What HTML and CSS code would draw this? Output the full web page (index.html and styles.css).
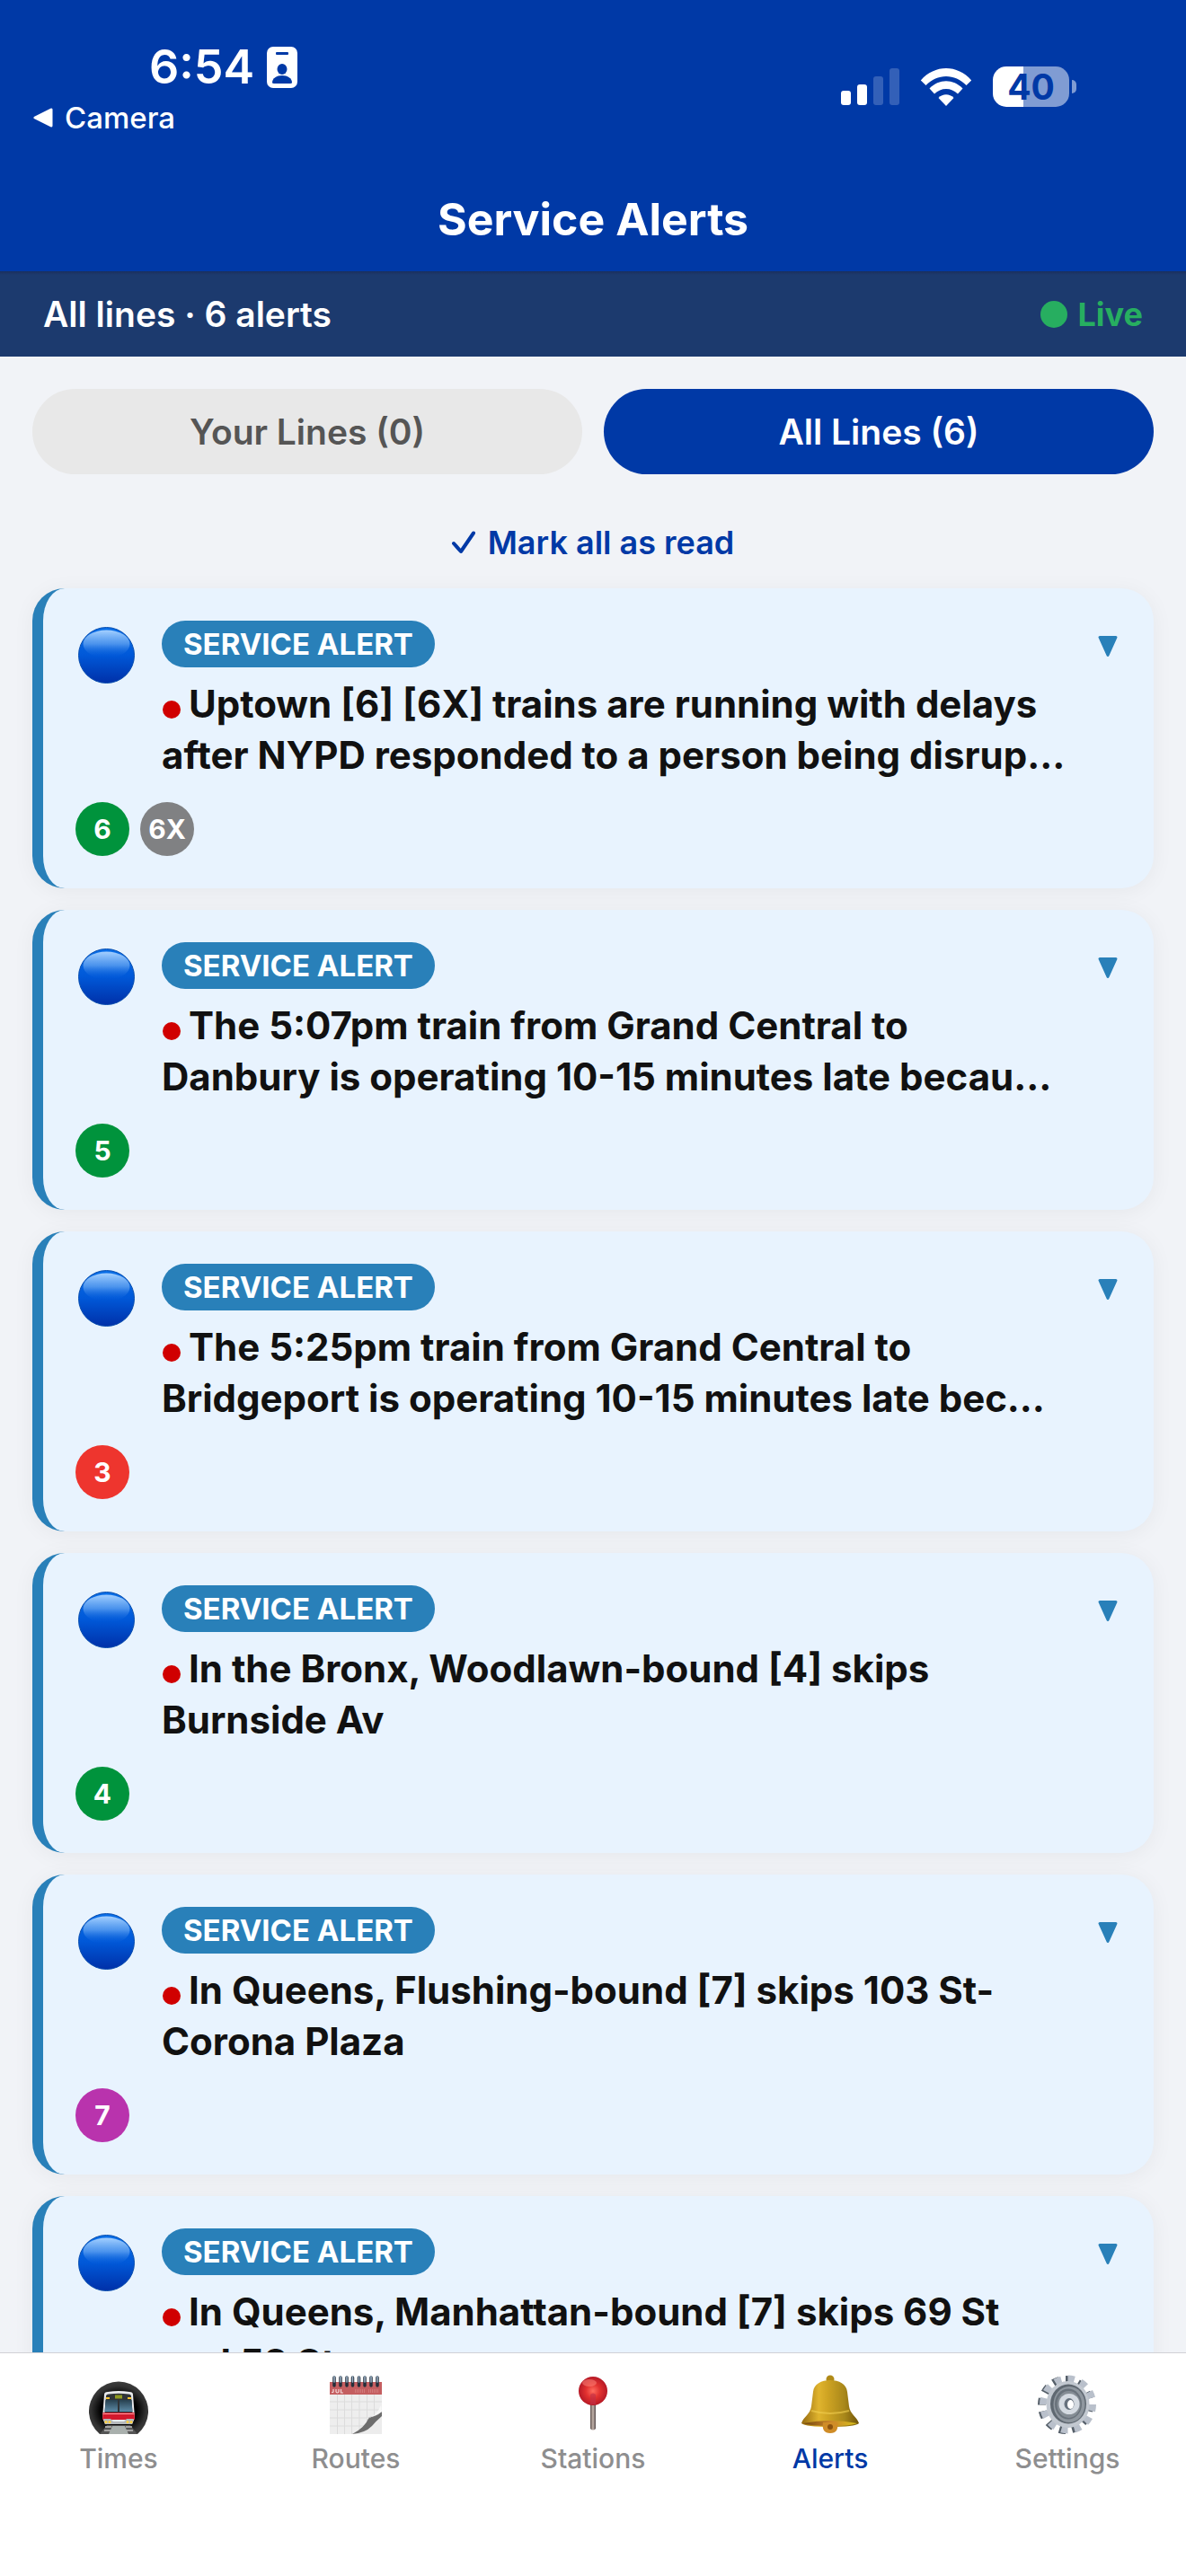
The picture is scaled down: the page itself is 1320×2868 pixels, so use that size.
FILE: index.html
```html
<!DOCTYPE html>
<html lang="en">
<head>
<meta charset="utf-8">
<meta name="viewport" content="width=device-width, initial-scale=1">
<title>Service Alerts</title>
<link rel="stylesheet" href="styles.css">
</head>
<body>
<svg class="defs" aria-hidden="true">
  <defs>
    <linearGradient id="orb-fill" x1="0" y1="0" x2="0" y2="1">
      <stop offset="0" stop-color="#0a6fe8"/><stop offset=".5" stop-color="#0058d8"/><stop offset="1" stop-color="#0030a8"/>
    </linearGradient>
    <linearGradient id="orb-shine" x1="0" y1="0" x2="0" y2="1">
      <stop offset="0" stop-color="#a4d0ff"/><stop offset=".5" stop-color="#5c9ff0" stop-opacity=".8"/><stop offset="1" stop-color="#0058d8" stop-opacity="0"/>
    </linearGradient>
    <symbol id="orb" viewBox="0 0 63 63">
      <circle cx="31.500" cy="31.500" r="31" fill="url(#orb-fill)" stroke="#0b4fae" stroke-width="1"/>
      <ellipse cx="31.500" cy="19" rx="26" ry="15.500" fill="url(#orb-shine)"/>
    </symbol>
    <symbol id="caret" viewBox="0 0 22 23">
      <path d="M2 1.500H20L11 21.500Z" fill="currentColor" stroke="currentColor" stroke-width="3" stroke-linejoin="round"/>
    </symbol>
  </defs>
</svg>

<div class="app">
  <header class="top">
    <div class="status">
      <div class="status-left">
        <div class="clock">6:54
          <svg class="id-icon" viewBox="0 0 34 46" aria-hidden="true">
            <rect width="34" height="46" rx="7" fill="#fff"/>
            <rect x="10" y="6" width="14" height="3" rx="1" fill="#0039a6"/>
            <ellipse cx="17" cy="25" rx="5.500" ry="6" fill="#0039a6"/>
            <path d="M6 40C6 35 11 32 17 32S28 35 28 40Q28 41 26 41H8Q6 41 6 40Z" fill="#0039a6"/>
          </svg>
        </div>
        <a class="back" href="#camera">
          <svg class="back-icon" viewBox="0 0 22 22" aria-hidden="true"><path d="M20 2V20L2 11Z" fill="#fff" stroke="#fff" stroke-width="3" stroke-linejoin="round"/></svg>
          Camera</a>
      </div>
      <div class="status-right">
        <svg class="signal" viewBox="0 0 65 41" aria-hidden="true">
          <rect y="25" width="11" height="16" rx="3" fill="#fff"/>
          <rect x="18" y="18" width="11" height="23" rx="3" fill="#fff"/>
          <rect x="36" y="9" width="11" height="32" rx="3" fill="#3360b8"/>
          <rect x="54" width="11" height="41" rx="3" fill="#3360b8"/>
        </svg>
        <svg class="wifi" viewBox="0 0 58 42" aria-hidden="true">
          <path d="M0.800 13.500C16-4.500 42-4.500 57.200 13.500L51.500 19C39 5.500 19 5.500 6.500 19Z" fill="#fff"/>
          <path d="M10.500 22.500C21 11.500 37 11.500 47.500 22.500L42 28.500C35 21 23 21 16 28.500Z" fill="#fff"/>
          <path d="M20.500 33C25 28 33 28 37.500 33L29 42Z" fill="#fff"/>
        </svg>
        <div class="battery"><span class="battery-level">40</span><span class="battery-cap"></span></div>
      </div>
    </div>
    <h1 class="title">Service Alerts</h1>
  </header>

  <div class="summary">
    <span class="summary-text">All lines · 6 alerts</span>
    <span class="live"><span class="live-dot"></span>Live</span>
  </div>

  <main class="content">
    <div class="filters">
      <button class="filter" type="button">Your Lines (0)</button>
      <button class="filter filter-active" type="button">All Lines (6)</button>
    </div>
    <button class="mark-read" type="button">
      <svg class="check" viewBox="0 0 26 26" aria-hidden="true"><path d="M2 14L10 23L24 2.500" fill="none" stroke="currentColor" stroke-width="4" stroke-linecap="round" stroke-linejoin="round"/></svg>
      Mark all as read</button>

    <div class="alerts">
      <article class="card">
        <div class="card-main">
          <svg class="orb" aria-hidden="true"><use href="#orb"/></svg>
          <div class="card-body">
            <span class="badge">SERVICE ALERT</span>
            <h2 class="headline"><span class="unread"></span>Uptown [6] [6X] trains are running with delays after NYPD responded to a person being disrup…</h2>
          </div>
          <button class="expand" type="button" aria-label="Expand alert"><svg class="caret" aria-hidden="true"><use href="#caret"/></svg></button>
        </div>
        <div class="routes"><span class="route route-green">6</span><span class="route route-gray">6X</span></div>
      </article>
      <article class="card">
        <div class="card-main">
          <svg class="orb" aria-hidden="true"><use href="#orb"/></svg>
          <div class="card-body">
            <span class="badge">SERVICE ALERT</span>
            <h2 class="headline"><span class="unread"></span>The 5:07pm train from Grand Central to Danbury is operating 10-15 minutes late becau…</h2>
          </div>
          <button class="expand" type="button" aria-label="Expand alert"><svg class="caret" aria-hidden="true"><use href="#caret"/></svg></button>
        </div>
        <div class="routes"><span class="route route-green">5</span></div>
      </article>
      <article class="card">
        <div class="card-main">
          <svg class="orb" aria-hidden="true"><use href="#orb"/></svg>
          <div class="card-body">
            <span class="badge">SERVICE ALERT</span>
            <h2 class="headline"><span class="unread"></span>The 5:25pm train from Grand Central to Bridgeport is operating 10-15 minutes late bec…</h2>
          </div>
          <button class="expand" type="button" aria-label="Expand alert"><svg class="caret" aria-hidden="true"><use href="#caret"/></svg></button>
        </div>
        <div class="routes"><span class="route route-red">3</span></div>
      </article>
      <article class="card">
        <div class="card-main">
          <svg class="orb" aria-hidden="true"><use href="#orb"/></svg>
          <div class="card-body">
            <span class="badge">SERVICE ALERT</span>
            <h2 class="headline"><span class="unread"></span>In the Bronx, Woodlawn-bound [4] skips Burnside Av</h2>
          </div>
          <button class="expand" type="button" aria-label="Expand alert"><svg class="caret" aria-hidden="true"><use href="#caret"/></svg></button>
        </div>
        <div class="routes"><span class="route route-green">4</span></div>
      </article>
      <article class="card">
        <div class="card-main">
          <svg class="orb" aria-hidden="true"><use href="#orb"/></svg>
          <div class="card-body">
            <span class="badge">SERVICE ALERT</span>
            <h2 class="headline"><span class="unread"></span>In Queens, Flushing-bound [7] skips 103 St-Corona Plaza</h2>
          </div>
          <button class="expand" type="button" aria-label="Expand alert"><svg class="caret" aria-hidden="true"><use href="#caret"/></svg></button>
        </div>
        <div class="routes"><span class="route route-purple">7</span></div>
      </article>
      <article class="card">
        <div class="card-main">
          <svg class="orb" aria-hidden="true"><use href="#orb"/></svg>
          <div class="card-body">
            <span class="badge">SERVICE ALERT</span>
            <h2 class="headline"><span class="unread"></span>In Queens, Manhattan-bound [7] skips 69 St and 52 St</h2>
          </div>
          <button class="expand" type="button" aria-label="Expand alert"><svg class="caret" aria-hidden="true"><use href="#caret"/></svg></button>
        </div>
        <div class="routes"><span class="route route-purple">7</span></div>
      </article>
    </div>
  </main>

  <nav class="tabs" aria-label="Main">
    <a class="tab" href="#times">
      <svg class="tab-icon" viewBox="0 0 66 66" aria-hidden="true">
        <defs>
          <radialGradient id="tunnel" cx=".5" cy=".55" r=".55"><stop offset=".55" stop-color="#000"/><stop offset=".85" stop-color="#333"/><stop offset="1" stop-color="#3c3c3c"/></radialGradient>
          <linearGradient id="glass" x1="0" y1="0" x2="0" y2="1"><stop offset="0" stop-color="#27404f"/><stop offset="1" stop-color="#5d8aa6"/></linearGradient>
        </defs>
        <path d="M12 66A33 33 0 1 1 54 66Z" fill="url(#tunnel)"/>
        <path d="M20 56H46L54 66H12Z" fill="#555"/>
        <path d="M26 57H40L44 66H22Z" fill="#a9b0ad"/>
        <path d="M18 58H25M17 62H24M41 58H48M42 62H49" stroke="#bbb" stroke-width="1.500"/>
        <path d="M17 22Q17 19 21 19Q33 17 45 19Q49 19 49 22L51 48L48 55H18L15 48Z" fill="#e9eaec"/>
        <path d="M19 24Q19 21.500 22 21.500Q33 20 44 21.500Q47 21.500 47 24L48.500 42H17.500Z" fill="#303437"/>
        <path d="M18.500 28H32V41H17.500ZM34 28H47.500L48.500 41H34Z" fill="url(#glass)"/>
        <rect x="29" y="22.500" width="8" height="4" fill="#8f9a20"/>
        <path d="M19 26H23M43 26H47" stroke="#ffc52e" stroke-width="2"/>
        <path d="M15.500 42H50.500L51 50H15Z" fill="#d3182c"/>
        <path d="M15.500 43.500H50.500" stroke="#ff9ca0" stroke-width="1"/>
        <path d="M16 49H24L27 52H39L42 49H50L48 55H18Z" fill="#b4b8bb"/>
        <circle cx="19" cy="52.500" r="1.500" fill="#ffd23e"/><circle cx="23" cy="52.500" r="1.500" fill="#ffd23e"/>
        <circle cx="43" cy="52.500" r="1.500" fill="#ffd23e"/><circle cx="47" cy="52.500" r="1.500" fill="#ffd23e"/>
      </svg>
      Times</a>
    <a class="tab" href="#routes">
      <svg class="tab-icon" viewBox="0 0 66 66" aria-hidden="true">
        <rect x="4" y="8" width="58" height="58" fill="#eee"/>
        <path d="M4 30H62M4 39H62M4 48H62M4 57H62M12.500 22V66M20.500 22V66M28.500 22V66M37 22V66M45.500 22V66M53.500 22V66" stroke="#dcdcdc" stroke-width="1"/>
        <path d="M62 44Q58 51 48 48Q46 59 33 66H62Z" fill="#ececec"/>
        <path d="M62 41Q55 47 48 47Q43 59 29 66Q43 65 51 57Q55 52 62 46Z" fill="#6d6d6d"/>
        <path d="M44 49Q55 48 61 34L62 41Q54 46 44 49Z" fill="#f8f8f8"/>
        <rect x="4" y="8" width="58" height="14" fill="#c45e60"/>
        <path d="M8 16V19Q7 20.500 6.500 19M11 16V19Q12.500 21 14 19V16M16.500 16V20H19" fill="none" stroke="#f6dada" stroke-width="1.200"/>
        <path d="M32 18H44M47 18H59" stroke="#d27a7b" stroke-width="4" stroke-dasharray="1 1"/>
        <path d="M9 3V12M16 3V12M23 3V12M29.500 3V12M36.500 3V12M43 3V12M50 3V12M57 3V12" stroke="#242e3a" stroke-width="3.500" stroke-linecap="round"/>
        <path d="M9 2V8M16 2V8M23 2V8M29.500 2V8M36.500 2V8M43 2V8M50 2V8M57 2V8" stroke="#9fb6cc" stroke-width="1.500" stroke-linecap="round"/>
      </svg>
      Routes</a>
    <a class="tab" href="#stations">
      <svg class="tab-icon" viewBox="0 0 66 66" aria-hidden="true">
        <defs>
          <radialGradient id="pin-head" cx=".5" cy=".5" r=".55"><stop offset="0" stop-color="#ff6d5f"/><stop offset=".45" stop-color="#e2312f"/><stop offset="1" stop-color="#ad1424"/></radialGradient>
          <linearGradient id="pin-stem" x1="0" x2="1" y1="0" y2="0"><stop offset="0" stop-color="#5d514e"/><stop offset=".5" stop-color="#c5b5ac"/><stop offset="1" stop-color="#54494a"/></linearGradient>
        </defs>
        <path d="M30 30H36V60Q33 63 30 60Z" fill="url(#pin-stem)"/>
        <circle cx="33" cy="18" r="16" fill="url(#pin-head)"/>
        <path d="M30 22Q33 19 36 22V33H30Z" fill="#c03048" opacity=".6"/>
        <ellipse cx="29" cy="9" rx="8" ry="4" fill="#ff8b80" opacity=".5"/>
      </svg>
      Stations</a>
    <a class="tab tab-active" href="#alerts" aria-current="page">
      <svg class="tab-icon" viewBox="0 0 66 66" aria-hidden="true">
        <defs>
          <linearGradient id="brass" x1="0" x2="1" y1="0" y2="0"><stop offset="0" stop-color="#94690f"/><stop offset=".3" stop-color="#e0b42e"/><stop offset=".45" stop-color="#cfa423"/><stop offset=".75" stop-color="#a8871a"/><stop offset="1" stop-color="#705408"/></linearGradient>
          <linearGradient id="brim" x1="0" x2="1" y1="0" y2="0"><stop offset="0" stop-color="#73480c"/><stop offset=".5" stop-color="#c9832a"/><stop offset="1" stop-color="#d9c21b"/></linearGradient>
        </defs>
        <circle cx="33" cy="5" r="4.500" fill="#b08a18"/>
        <path d="M1 54C3 47 11 44 12 35L14 19C15 10 23 6 33 6S51 10 52 19L54 35C55 44 63 47 65 54Q60 58 33 58T1 54Z" fill="url(#brass)"/>
        <path d="M3 54Q33 48 63 54Q56 57 33 57T3 54Z" fill="url(#brim)"/>
        <path d="M12 40Q33 46 54 40" fill="none" stroke="#f1cf50" stroke-width="2" opacity=".6"/>
        <path d="M25 53H41Q43 65 33 65T25 53Z" fill="#cf8c27"/>
        <circle cx="33" cy="58" r="3" fill="#8d530e"/>
      </svg>
      Alerts</a>
    <a class="tab" href="#settings">
      <svg class="tab-icon" viewBox="0 0 66 66" aria-hidden="true">
        <ellipse cx="31" cy="33.500" rx="26.500" ry="28" fill="none" stroke="#545e68" stroke-width="9" pathLength="120" stroke-dasharray="5 5"/>
        <ellipse cx="33.500" cy="33" rx="27.500" ry="28.500" fill="none" stroke="#b9c0cb" stroke-width="8" pathLength="120" stroke-dasharray="5 5"/>
        <ellipse cx="33.500" cy="33" rx="24" ry="26" fill="#c2c8d0"/>
        <ellipse cx="34" cy="32.500" rx="20" ry="22" fill="#5f6871"/>
        <ellipse cx="35" cy="33" rx="17.500" ry="20" fill="#8f979f"/>
        <ellipse cx="34" cy="32.500" rx="15" ry="17" fill="#69727b"/>
        <ellipse cx="34.500" cy="33" rx="13" ry="15" fill="#858d95"/>
        <ellipse cx="35" cy="32.500" rx="11.500" ry="11.500" fill="#d4dae1"/>
        <ellipse cx="35" cy="32.500" rx="5.500" ry="6.500" fill="#66717d"/>
        <ellipse cx="36.500" cy="33" rx="3.500" ry="5" fill="#fff"/>
      </svg>
      Settings</a>
  </nav>
</div>
</body>
</html>
```
FILE: styles.css
```css
* { box-sizing: border-box; }

body {
  margin: 0;
  font-family: Inter, "Liberation Sans", sans-serif;
  background: #f1f3f7;
  color: #111;
}

button {
  margin: 0;
  padding: 0;
  border: 0;
  background: none;
  color: inherit;
  font: inherit;
}

a { color: inherit; text-decoration: none; }

.defs { position: absolute; width: 0; height: 0; }

.app {
  display: flex;
  flex-direction: column;
  height: 100vh;
}

/* Header */
.top { background: #0039a6; color: #fff; }

.status {
  display: flex;
  justify-content: space-between;
  height: 186px;
  padding: 45px 122px 0 36px;
}

.clock {
  display: flex;
  align-items: center;
  gap: 14px;
  margin-left: 130px;
  font-size: 52px;
  font-weight: 600;
  line-height: 60px;
}

.id-icon { width: 34px; height: 46px; }

.back {
  display: flex;
  align-items: center;
  gap: 12px;
  margin-top: 6px;
  font-size: 33px;
  font-weight: 500;
  line-height: 40px;
}

.back-icon { width: 24px; height: 22px; }

.status-right {
  display: flex;
  align-items: center;
  gap: 23px;
  height: 45px;
  margin-top: 29px;
}

.signal { width: 65px; height: 41px; }
.wifi { width: 58px; height: 42px; }

.battery { display: flex; align-items: center; gap: 3px; }

.battery-level {
  width: 85px;
  border-radius: 15px;
  background: linear-gradient(90deg, #fff 40%, #809cd3 40%);
  color: #0039a6;
  font-size: 39px;
  font-weight: 700;
  line-height: 45px;
  text-align: center;
}

.battery-cap {
  width: 5px;
  height: 15px;
  border-radius: 0 5px 5px 0;
  background: #809cd3;
}

.title {
  margin: 0;
  font-size: 50px;
  font-weight: 700;
  line-height: 116px;
  text-align: center;
}

.summary {
  display: flex;
  justify-content: space-between;
  align-items: center;
  height: 95px;
  padding: 0 48px;
  background: linear-gradient(#1a2f5e, #1c3a6e 4px);
  color: #fff;
  font-size: 39px;
  font-weight: 600;
}

.live {
  display: flex;
  align-items: center;
  gap: 12px;
  color: #27ae60;
  font-size: 36px;
  font-weight: 700;
}

.live-dot { width: 30px; height: 30px; border-radius: 50%; background: currentColor; }

/* Scrolling list */
.content {
  display: flex;
  flex: 1;
  flex-direction: column;
  min-height: 0;
  overflow-y: auto;
  scrollbar-width: none;
}

.filters { display: flex; gap: 24px; padding: 36px 36px 24px; }

.filter {
  flex: 1;
  height: 95px;
  border-radius: 48px;
  background: #e8e8e8;
  color: #555;
  font-size: 39px;
  font-weight: 600;
}

.filter-active { background: #0039a6; color: #fff; }

.mark-read {
  display: flex;
  flex: none;
  align-items: center;
  align-self: center;
  gap: 14px;
  height: 103px;
  color: #0039a6;
  font-size: 36px;
  font-weight: 600;
}

.check { width: 26px; height: 26px; }

.alerts {
  display: flex;
  flex-direction: column;
  gap: 24px;
  padding: 0 36px 36px;
}

.card {
  display: flex;
  flex-direction: column;
  gap: 24px;
  padding: 36px;
  border-left: 12px solid #2980b9;
  border-radius: 36px;
  background: #e8f3fe;
  box-shadow: 0 3px 24px rgba(0, 0, 0, 0.05);
}

.card-main { display: flex; align-items: flex-start; }

.orb { flex: none; width: 63px; height: 63px; margin: 7px 30px 0 3px; }

.card-body {
  display: flex;
  flex: 1;
  flex-direction: column;
  align-items: flex-start;
  gap: 12px;
}

.badge {
  padding: 0 24px;
  border-radius: 26px;
  background: #2980b9;
  color: #fff;
  font-size: 33px;
  font-weight: 700;
  line-height: 52px;
}

.headline {
  margin: 0;
  font-size: 42px;
  font-weight: 700;
  line-height: 57px;
}

.unread {
  display: inline-block;
  width: 20px;
  height: 20px;
  margin: 0 9px 0 1px;
  border-radius: 50%;
  background: #d00000;
  vertical-align: -1px;
}

.expand { flex: none; padding: 17px 4px 12px 32px; line-height: 0; color: #2980b9; }
.caret { width: 22px; height: 23px; }

.routes { display: flex; gap: 12px; }

.route {
  width: 60px;
  border-radius: 50%;
  color: #fff;
  font-size: 30px;
  font-weight: 700;
  line-height: 60px;
  text-align: center;
}

.route-green { background: #00933c; }
.route-gray { background: #808183; }
.route-red { background: #ee352e; }
.route-purple { background: #b933ad; }

/* Bottom tabs */
.tabs {
  display: flex;
  height: 249px;
  border-top: 1px solid #d1d1d6;
  background: #fff;
}

.tab {
  display: flex;
  flex: 1;
  flex-direction: column;
  align-items: center;
  gap: 9px;
  padding-top: 24px;
  color: #8e8e8f;
  font-size: 30px;
  font-weight: 500;
  line-height: 36px;
}

.tab-active { color: #0039a6; }
.tab-icon { width: 66px; height: 66px; }
```
